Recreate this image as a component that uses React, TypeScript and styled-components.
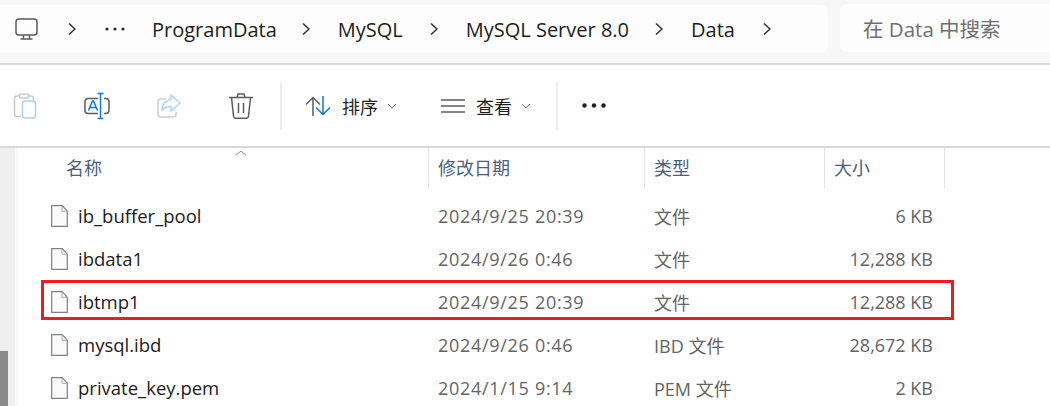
import React from "react";
import styled, { createGlobalStyle } from "styled-components";

const GlobalStyle = createGlobalStyle`
  html, body {
    margin: 0;
    padding: 0;
    background: #ffffff;
  }
  body {
    font-family: "Open Sans", "Noto Sans CJK SC", sans-serif;
  }
`;

const Page = styled.div`
  width: 1050px;
  height: 406px;
  overflow: hidden;
  display: flex;
  flex-direction: column;
  background: #ffffff;
`;

const TopBar = styled.div`
  height: 63px;
  display: flex;
  gap: 12px;
  background: #f7f7f7;
  border-bottom: 2px solid #d9d9d9;
  flex: none;
`;

const AddressBar = styled.div`
  width: 828px;
  height: 48px;
  margin-top: 5px;
  padding-left: 15px;
  box-sizing: border-box;
  display: flex;
  align-items: center;
  background: #fdfdfd;
  border-radius: 0 7px 7px 0;
`;

const Crumb = styled.span<{ $gap: number }>`
  font-size: 20px;
  color: #1c1c1c;
  margin-left: ${p => p.$gap}px;
  white-space: nowrap;
`;

const CrumbIcon = styled.svg<{ $gap: number }>`
  flex: none;
  margin-left: ${p => p.$gap}px;
`;

const SearchBox = styled.div`
  flex: 1;
  height: 48px;
  margin-top: 4px;
  padding-left: 23px;
  display: flex;
  align-items: center;
  font-size: 20.5px;
  color: #6f6f6f;
  background: #fdfdfd;
  border-radius: 7px 0 0 7px;
  white-space: nowrap;
`;

const Toolbar = styled.div`
  height: 81px;
  flex: none;
  display: flex;
  align-items: center;
  padding-left: 12px;
  border-bottom: 2px solid #d9d9d9;
`;

const ToolIcon = styled.svg<{ $gap?: number }>`
  flex: none;
  margin-left: ${p => p.$gap ?? 0}px;
`;

const Divider = styled.div<{ $gap: number }>`
  width: 2px;
  height: 48px;
  background: #ececec;
  margin-left: ${p => p.$gap}px;
  flex: none;
`;

const ToolLabel = styled.span`
  font-size: 18px;
  color: #1f1f1f;
  margin-left: 11px;
  white-space: nowrap;
`;

const Body = styled.div`
  flex: 1;
  display: flex;
  min-height: 0;
`;

const Gutter = styled.div`
  width: 15px;
  flex: none;
  display: flex;
  flex-direction: column;
  justify-content: flex-end;
  background: #efefef;
  border-right: 3px solid #f8f8f8;
`;

const Thumb = styled.div`
  width: 8px;
  height: 55px;
  background: #8a8a8a;
`;

const List = styled.div`
  flex: 1;
  min-width: 0;
`;

const columns = "411px 216px 180px 120px";

const HeaderRow = styled.div`
  position: relative;
  height: 40px;
  display: grid;
  grid-template-columns: ${columns};
  align-items: stretch;
  margin-bottom: 6px;
`;

const HeaderCell = styled.div<{ $inset: number }>`
  display: flex;
  align-items: center;
  padding: 0 0 2px ${p => p.$inset}px;
  font-size: 18px;
  color: #4c607a;
  border-right: 1.5px solid #e3e3e3;
`;

const SortCaret = styled.svg`
  position: absolute;
  left: 217px;
  top: 2px;
`;

const Row = styled.div`
  position: relative;
  height: 43px;
  display: grid;
  grid-template-columns: ${columns};
  align-items: center;
`;

const NameCell = styled.div`
  display: flex;
  align-items: center;
  padding-left: 33px;
  font-size: 18.5px;
  color: #1b1b1b;
  white-space: nowrap;
`;

const FileGlyph = styled.svg`
  flex: none;
  margin-right: 10px;
`;

const MetaCell = styled.div<{ $right?: boolean }>`
  font-size: 18px;
  color: #646464;
  white-space: nowrap;
  padding: ${p => (p.$right ? "0 12px 0 0" : "0 0 0 9px")};
  text-align: ${p => (p.$right ? "right" : "left")};
`;

const DateCell = styled(MetaCell)`
  letter-spacing: 0.7px;
`;

const Highlight = styled.div`
  position: absolute;
  left: 23px;
  top: 0;
  width: 913px;
  height: 40px;
  box-sizing: border-box;
  border: 3px solid #ed1c24;
  pointer-events: none;
`;

const Chevron = ({ gap }: { gap: number }) => (
  <CrumbIcon $gap={gap} width="8" height="14" viewBox="0 0 8 14" fill="none">
    <path d="M1 1.500 7 7 1 12.500" stroke="#2b2b2b" strokeWidth="1.500" />
  </CrumbIcon>
);

const Caret = () => (
  <ToolIcon $gap={9} width="10" height="6" viewBox="0 0 10 6" fill="none">
    <path d="M1 1l4 4 4-4" stroke="#7a7a7a" strokeWidth="1" />
  </ToolIcon>
);

const files = [
  { name: "ib_buffer_pool", date: "2024/9/25 20:39", type: "文件", size: "6 KB" },
  { name: "ibdata1", date: "2024/9/26 0:46", type: "文件", size: "12,288 KB" },
  { name: "ibtmp1", date: "2024/9/25 20:39", type: "文件", size: "12,288 KB", marked: true },
  { name: "mysql.ibd", date: "2024/9/26 0:46", type: "IBD 文件", size: "28,672 KB" },
  { name: "private_key.pem", date: "2024/1/15 9:14", type: "PEM 文件", size: "2 KB" }
];

export default function App() {
  return (
    <Page>
      <GlobalStyle />
      <TopBar>
        <AddressBar>
          <CrumbIcon $gap={0} width="23" height="23" viewBox="0 0 23 23" fill="none">
            <rect x="1" y="1" width="21" height="16" rx="3" stroke="#5a5a5a" strokeWidth="1.500" />
            <path d="M8.500 17v3.500M14.500 17v3.500M5.500 21h12" stroke="#5a5a5a" strokeWidth="1.500" />
          </CrumbIcon>
          <Chevron gap={30} />
          <CrumbIcon $gap={29} width="20" height="4" viewBox="0 0 20 4" fill="#2b2b2b">
            <circle cx="2" cy="2" r="1.600" />
            <circle cx="10" cy="2" r="1.600" />
            <circle cx="18" cy="2" r="1.600" />
          </CrumbIcon>
          <Crumb $gap={27}>ProgramData</Crumb>
          <Chevron gap={25} />
          <Crumb $gap={28}>MySQL</Crumb>
          <Chevron gap={27} />
          <Crumb $gap={28}>MySQL Server 8.0</Crumb>
          <Chevron gap={26} />
          <Crumb $gap={28}>Data</Crumb>
          <Chevron gap={28} />
        </AddressBar>
        <SearchBox>在 Data 中搜索</SearchBox>
      </TopBar>

      <Toolbar>
        <ToolIcon width="26" height="28" viewBox="0 0 26 28" fill="none">
          <path d="M7 4H5a2.500 2.500 0 0 0-2.500 2.500V22A2.500 2.500 0 0 0 5 24.500h4" stroke="#c9c9c9" strokeWidth="1.500" />
          <path d="M17 4h2a2.500 2.500 0 0 1 2.500 2.500V8" stroke="#c9c9c9" strokeWidth="1.500" />
          <rect x="7.500" y="2" width="9" height="4" rx="1.500" stroke="#c9c9c9" strokeWidth="1.500" />
          <rect x="10.500" y="9" width="13" height="17" rx="2.500" stroke="#a9d4f5" strokeWidth="1.500" />
        </ToolIcon>
        <ToolIcon $gap={46} width="26" height="28" viewBox="0 0 26 28" fill="none">
          <path d="M14 6.500H4A3 3 0 0 0 1 9.500v9a3 3 0 0 0 3 3h10" stroke="#5c5c5c" strokeWidth="1.500" />
          <path d="M20 6.500h2a3 3 0 0 1 3 3v9a3 3 0 0 1-3 3h-2" stroke="#5c5c5c" strokeWidth="1.500" />
          <path d="M4.500 18.500 8.500 9h1l4 9.500M6 15.500h6" stroke="#0f78d4" strokeWidth="1.500" />
          <path d="M13.500 1.500h6M16.500 1.500v25M13.500 26.500h6" stroke="#0f78d4" strokeWidth="1.500" />
        </ToolIcon>
        <ToolIcon $gap={46} width="26" height="28" viewBox="0 0 26 28" fill="none">
          <path d="M10 7H5a3 3 0 0 0-3 3v12a3 3 0 0 0 3 3h12a3 3 0 0 0 3-3v-2" stroke="#cdcdcd" strokeWidth="1.500" />
          <path d="M15 3l9 8-9 8v-4.500c-4 0-7 1-9 4 0-5.500 3-10.500 9-11z" stroke="#a9d4f5" strokeWidth="1.500" strokeLinejoin="round" />
        </ToolIcon>
        <ToolIcon $gap={46} width="26" height="28" viewBox="0 0 26 28" fill="none">
          <path d="M1 5.500h24M9 5.500 10 2h6l1 3.500" stroke="#5c5c5c" strokeWidth="1.500" />
          <path d="M3.500 5.500 5.500 24a2.500 2.500 0 0 0 2.500 2.200h10a2.500 2.500 0 0 0 2.500-2.200l2-18.500" stroke="#5c5c5c" strokeWidth="1.500" />
          <path d="M10.500 11v10M15.500 11v10" stroke="#5c5c5c" strokeWidth="1.500" />
        </ToolIcon>
        <Divider $gap={26} />
        <ToolIcon $gap={23} width="26" height="20" viewBox="0 0 26 20" fill="none">
          <path d="M8 20V1.500M1 8.500l7-7 7 7" stroke="#5c5c5c" strokeWidth="1.500" />
          <path d="M18 0v18.500M11 11.500l7 7 7-7" stroke="#0f78d4" strokeWidth="1.500" />
        </ToolIcon>
        <ToolLabel>排序</ToolLabel>
        <Caret />
        <ToolIcon $gap={44} width="24" height="14" viewBox="0 0 24 14" fill="none">
          <path d="M0 1h24M0 7h24M0 13h24" stroke="#5c5c5c" strokeWidth="1.500" />
        </ToolIcon>
        <ToolLabel>查看</ToolLabel>
        <Caret />
        <Divider $gap={25} />
        <ToolIcon $gap={24} width="24" height="5" viewBox="0 0 24 5" fill="#1f1f1f">
          <circle cx="2.500" cy="2.500" r="2.200" />
          <circle cx="12" cy="2.500" r="2.200" />
          <circle cx="21.500" cy="2.500" r="2.200" />
        </ToolIcon>
      </Toolbar>

      <Body>
        <Gutter>
          <Thumb />
        </Gutter>
        <List>
          <HeaderRow>
            <HeaderCell $inset={48}>名称</HeaderCell>
            <HeaderCell $inset={9}>修改日期</HeaderCell>
            <HeaderCell $inset={9}>类型</HeaderCell>
            <HeaderCell $inset={9}>大小</HeaderCell>
            <SortCaret width="12" height="6" viewBox="0 0 12 6" fill="none">
              <path d="M1 5l5-4 5 4" stroke="#8a8a8a" strokeWidth="1" />
            </SortCaret>
          </HeaderRow>
          {files.map(file => (
            <Row key={file.name}>
              <NameCell>
                <FileGlyph width="17" height="22" viewBox="0 0 17 22" fill="none">
                  <path d="M.7.700h10.500l5.100 5.500v15.100H.7z" fill="#fbfbfb" stroke="#7f7f7f" strokeWidth="1.200" />
                  <path d="M11 1v5.300h5.300" stroke="#a8a8a8" strokeWidth="1" />
                </FileGlyph>
                {file.name}
              </NameCell>
              <DateCell>{file.date}</DateCell>
              <MetaCell>{file.type}</MetaCell>
              <MetaCell $right>{file.size}</MetaCell>
              {file.marked && <Highlight />}
            </Row>
          ))}
        </List>
      </Body>
    </Page>
  );
}
